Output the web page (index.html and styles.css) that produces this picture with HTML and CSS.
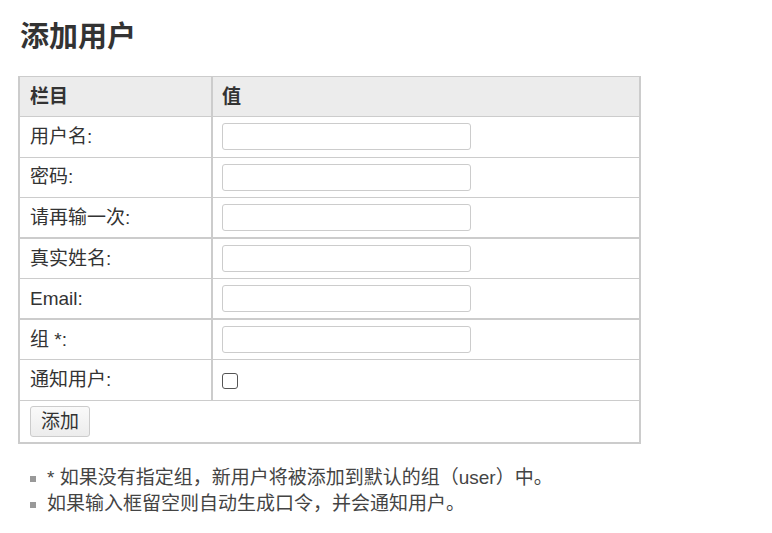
FILE: index.html
```html
<!DOCTYPE html>
<html>
<head>
<meta charset="utf-8">
<link rel="stylesheet" href="styles.css">
</head>
<body>
<div class="page">
  <h1 class="title">添加用户</h1>
  <table class="form-table">
    <thead>
      <tr><th class="col-label">栏目</th><th class="col-value">值</th></tr>
    </thead>
    <tbody>
      <tr><td class="col-label">用户名:</td><td class="col-value"><input class="text-input" type="text"></td></tr>
      <tr><td class="col-label">密码:</td><td class="col-value"><input class="text-input" type="password"></td></tr>
      <tr class="thick"><td class="col-label">请再输一次:</td><td class="col-value"><input class="text-input" type="password"></td></tr>
      <tr><td class="col-label">真实姓名:</td><td class="col-value"><input class="text-input" type="text"></td></tr>
      <tr class="thick"><td class="col-label">Email:</td><td class="col-value"><input class="text-input" type="text"></td></tr>
      <tr><td class="col-label">组 *:</td><td class="col-value"><input class="text-input" type="text"></td></tr>
      <tr><td class="col-label">通知用户:</td><td class="col-value"><span class="checkbox"></span></td></tr>
      <tr><td class="button-cell" colspan="2"><button class="btn" type="button">添加</button></td></tr>
    </tbody>
  </table>
  <ul class="notes">
    <li>* 如果没有指定组，新用户将被添加到默认的组（user）中。</li>
    <li>如果输入框留空则自动生成口令，并会通知用户。</li>
  </ul>
</div>
</body>
</html>
```

FILE: styles.css
```css
html, body {
  margin: 0;
  padding: 0;
  background: #fff;
}
body {
  font-family: "Liberation Sans", "Noto Sans CJK SC", sans-serif;
  font-size: 19px;
  color: #333;
}
.page {
  padding: 0 0 0 18px;
}
.title {
  margin: 0;
  padding: 20px 0 0 2px;
  font-size: 29px;
  line-height: 34px;
  font-weight: bold;
  color: #333;
}
.form-table {
  margin-top: 22px;
  width: 623px;
  border-collapse: collapse;
  border-top: 1px solid #ccc;
  border-left: 2px solid #ccc;
  border-right: 2px solid #ccc;
  border-bottom: 2px solid #ccc;
}
.form-table th,
.form-table td {
  border-bottom: 1px solid #ccc;
  padding: 0 9px 0 10px;
  height: 40px;
  box-sizing: border-box;
  text-align: left;
  vertical-align: middle;
  line-height: 22px;
}
.form-table th {
  background: #ececec;
  font-weight: bold;
  font-size: 19px;
  color: #333;
}
.form-table .col-label {
  width: 193px;
  border-right: 2px solid #ccc;
}
.form-table .col-value {
  padding-left: 9px;
}
.form-table tr.thick td {
  border-bottom-width: 2px;
}
.form-table tbody tr td {
  height: 40.5px;
}
.text-input {
  display: block;
  width: 249px;
  height: 27px;
  box-sizing: border-box;
  border: 1px solid #ccc;
  border-radius: 3px;
  background: #fff;
  margin: 0;
  padding: 0 4px;
  font-size: 16px;
}
.checkbox {
  display: block;
  width: 16px;
  height: 16px;
  border: 1px solid #555;
  border-radius: 3px;
  box-sizing: border-box;
  background: #fff;
  margin-top: 2px;
}
.form-table td.button-cell {
  border-right: none;
  height: 43px;
  padding: 0 10px;
}
.btn {
  display: block;
  height: 31px;
  padding: 0 10px;
  border: 1px solid #ccc;
  border-radius: 3px;
  background: linear-gradient(#fafafa, #ececec);
  font-family: "Liberation Sans", "Noto Sans CJK SC", sans-serif;
  font-size: 19px;
  color: #333;
  line-height: 29px;
}
.notes {
  margin: 21px 0 0 0;
  padding: 0 0 0 29px;
  list-style: none;
}
.notes li {
  position: relative;
  line-height: 26px;
  font-size: 19px;
  color: #444;
}
.notes li::before {
  content: "";
  position: absolute;
  left: -17px;
  top: 11px;
  width: 6px;
  height: 6px;
  background: #999;
}
```
